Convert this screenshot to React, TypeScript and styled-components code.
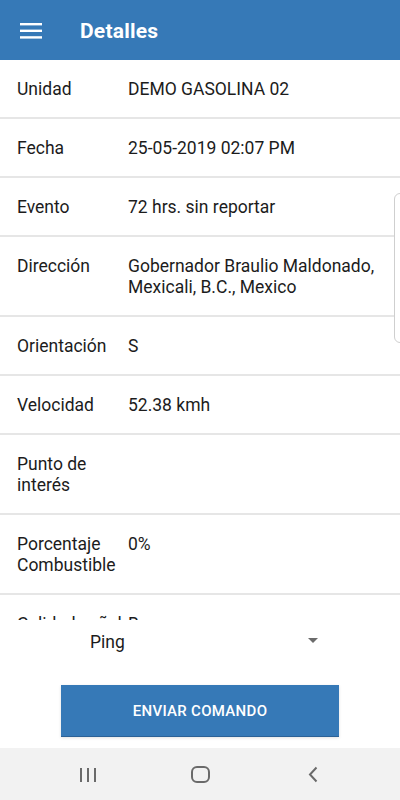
import React from "react";
import styled, { createGlobalStyle } from "styled-components";

const GlobalStyle = createGlobalStyle`
  html, body {
    margin: 0;
    padding: 0;
    background: #fff;
    font-family: Roboto, "Liberation Sans", Arial, sans-serif;
  }
  * {
    box-sizing: border-box;
  }
`;

const Screen = styled.div`
  position: relative;
  width: 400px;
  height: 800px;
  display: flex;
  flex-direction: column;
  overflow: hidden;
  background: #fff;
`;

const Header = styled.header`
  height: 60px;
  flex-shrink: 0;
  background-color: #3679b7;
  display: flex;
  align-items: center;
  padding-left: 20px;
  color: #fff;
`;

const MenuButton = styled.div`
  width: 22px;
  height: 16px;
  display: flex;
  margin-top: 1px;
`;

const Title = styled.h1`
  margin: 1px 0 0 38px;
  font-size: 21px;
  font-weight: 700;
  letter-spacing: 0.2px;
`;

const List = styled.div`
  flex: 1;
  overflow: hidden;
`;

const Row = styled.div`
  display: flex;
  padding: 19px 16px 17px 17px;
  border-bottom: 2px solid #e6e6e6;
  font-size: 17.5px;
  line-height: 21px;
  color: #1c1c1c;
`;

const Label = styled.div`
  width: 111px;
  flex-shrink: 0;
  padding-right: 4px;
`;

const Value = styled.div`
  flex: 1;
`;

const EdgeHandle = styled.div`
  position: absolute;
  top: 193px;
  right: -6px;
  width: 12px;
  height: 150px;
  border: 1px solid #cfcfcf;
  border-radius: 6px;
  background: #fff;
`;

const Panel = styled.div`
  height: 128px;
  flex-shrink: 0;
  background: #fff;
  display: flex;
  flex-direction: column;
`;

const Picker = styled.div`
  height: 44px;
  display: flex;
  align-items: center;
  justify-content: space-between;
  padding: 0 82px 0 90px;
  font-size: 17.5px;
  color: #1c1c1c;
`;

const Caret = styled.span`
  width: 0;
  height: 0;
  border-left: 5.5px solid transparent;
  border-right: 5.5px solid transparent;
  border-top: 5px solid #6b6b6b;
  margin-top: -3px;
`;

const SendButton = styled.button`
  margin: 21px auto 0;
  width: 278px;
  height: 52px;
  border: none;
  border-bottom: 1px solid #2b6196;
  background-color: #3679b7;
  color: #fff;
  font-family: Roboto, "Liberation Sans", Arial, sans-serif;
  font-size: 15px;
  font-weight: 500;
  letter-spacing: 0.3px;
  box-shadow: 0 1px 3px rgba(0, 0, 0, 0.12);
`;

const NavBar = styled.nav`
  height: 52px;
  flex-shrink: 0;
  background: #f2f2f2;
  display: grid;
  grid-template-columns: 1fr 1fr 1fr;
  align-items: center;
  justify-items: center;
  padding: 0 31px 0 32px;
`;

const NavIcon = styled.svg`
  display: block;
  margin-top: 1px;
`;

const rows: { label: string; value: string }[] = [
  { label: "Unidad", value: "DEMO GASOLINA 02" },
  { label: "Fecha", value: "25-05-2019 02:07 PM" },
  { label: "Evento", value: "72 hrs. sin reportar" },
  { label: "Dirección", value: "Gobernador Braulio Maldonado, Mexicali, B.C., Mexico" },
  { label: "Orientación", value: "S" },
  { label: "Velocidad", value: "52.38 kmh" },
  { label: "Punto de interés", value: "" },
  { label: "Porcentaje Combustible", value: "0%" },
  { label: "Calidad señal", value: "Buena" },
  { label: "Temperatura", value: "" },
];

export default function App() {
  return (
    <Screen>
      <GlobalStyle />
      <Header>
        <MenuButton>
          <svg width="22" height="16" viewBox="0 0 22 16">
            <rect x="0" y="0" width="22" height="2.4" fill="#fff" />
            <rect x="0" y="6.6" width="22" height="2.4" fill="#fff" />
            <rect x="0" y="13.2" width="22" height="2.4" fill="#fff" />
          </svg>
        </MenuButton>
        <Title>Detalles</Title>
      </Header>
      <List>
        {rows.map((r) => (
          <Row key={r.label}>
            <Label>{r.label}</Label>
            <Value>{r.value}</Value>
          </Row>
        ))}
      </List>
      <Panel>
        <Picker>
          <span>Ping</span>
          <Caret />
        </Picker>
        <SendButton>ENVIAR COMANDO</SendButton>
      </Panel>
      <NavBar>
        <NavIcon width="18" height="16" viewBox="0 0 18 16">
          <rect x="1" y="1" width="2" height="14" fill="#6a6a6a" />
          <rect x="8" y="1" width="2" height="14" fill="#6a6a6a" />
          <rect x="15" y="1" width="2" height="14" fill="#6a6a6a" />
        </NavIcon>
        <NavIcon width="19" height="17" viewBox="0 0 19 17">
          <rect x="1" y="1" width="17" height="15" rx="5" fill="none" stroke="#6a6a6a" strokeWidth="2" />
        </NavIcon>
        <NavIcon width="12" height="17" viewBox="0 0 12 17">
          <path d="M9.5 1.5 L3 8.5 L9.5 15.5" fill="none" stroke="#6a6a6a" strokeWidth="2" />
        </NavIcon>
      </NavBar>
      <EdgeHandle />
    </Screen>
  );
}
